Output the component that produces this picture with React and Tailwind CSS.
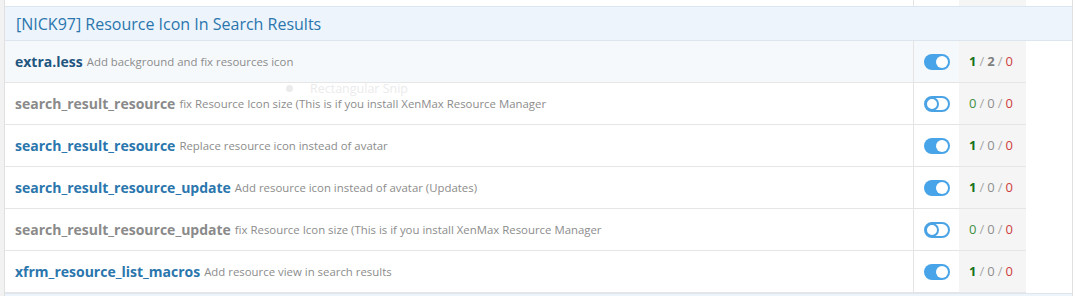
import React from "react";

const rows = [
  { name: "extra.less", desc: "Add background and fix resources icon", on: true, counts: [1, 2, 0], hover: true },
  { name: "search_result_resource", desc: "fix Resource Icon size (This is if you install XenMax Resource Manager", on: false, counts: [0, 0, 0] },
  { name: "search_result_resource", desc: "Replace resource icon instead of avatar", on: true, counts: [1, 0, 0] },
  { name: "search_result_resource_update", desc: "Add resource icon instead of avatar (Updates)", on: true, counts: [1, 0, 0] },
  { name: "search_result_resource_update", desc: "fix Resource Icon size (This is if you install XenMax Resource Manager", on: false, counts: [0, 0, 0] },
  { name: "xfrm_resource_list_macros", desc: "Add resource view in search results", on: true, counts: [1, 0, 0] },
];

function Toggle({ on }) {
  if (on) {
    return (
      <svg width="26" height="16" viewBox="0 0 26 16">
        <rect x="0" y="0" width="26" height="16" rx="8" fill="#47a4e8" />
        <circle cx="18" cy="8" r="6" fill="#fff" />
      </svg>
    );
  }
  return (
    <svg width="26" height="16" viewBox="0 0 26 16">
      <rect x="1" y="1" width="24" height="14" rx="7" fill="#fff" stroke="#4aa3e4" strokeWidth="2" />
      <circle cx="8" cy="8" r="6" fill="#fff" stroke="#4aa3e4" strokeWidth="2" />
    </svg>
  );
}

function Counts({ c }) {
  const [a, b, d] = c;
  return (
    <div className="flex items-center text-[13px] gap-[3px]">
      <span className={a > 0 ? "font-bold text-[#177217]" : "text-[#3f8f3f]"}>{a}</span>
      <span className="text-[#a9a9a9]">/</span>
      <span className={b > 0 ? "font-bold text-[#7f7f7f]" : "text-[#8f8f8f]"}>{b}</span>
      <span className="text-[#a9a9a9]">/</span>
      <span className="text-[#cf3d3d]">{d}</span>
    </div>
  );
}

export default function App() {
  return (
    <div className="relative w-[1078px] h-[296px] overflow-hidden bg-white flex font-['Open_Sans',sans-serif]">
      <div className="w-[4px] bg-[#f2f2f2]" />
      <div className="w-[1069px] border-x border-[#e0e0e0] flex flex-col">
        {/* tail of previous group */}
        <div className="h-[6px] grid grid-cols-[908px_46px_67px_1fr]">
          <div />
          <div className="border-l border-[#e4e4e4]" />
          <div className="bg-[#f5f5f5]" />
          <div />
        </div>

        {/* group header */}
        <div className="h-[35px] bg-[#edf4fc] border-y border-[#dde5ee] flex items-center pl-[11px]">
          <span className="text-[16px] text-[#2a76ad]">[NICK97] Resource Icon In Search Results</span>
        </div>

        {rows.map((r, i) => (
          <div key={i} className="h-[42px] grid grid-cols-[908px_46px_67px_1fr]">
            <div className={`flex items-center pl-[10px] border-b border-[#e6e6e6] ${r.hover ? "bg-[#f6f9fc]" : ""}`}>
              <span
                className={`text-[14px] font-bold ${
                  !r.on ? "text-[#8a8a8a]" : r.hover ? "text-[#1f5680]" : "text-[#2a76ad]"
                }`}
              >
                {r.name}
              </span>
              <span className="ml-[4px] text-[11.4px] text-[#8c8c8c]">{r.desc}</span>
            </div>
            <div className={`flex items-center justify-center border-l border-b border-[#e4e4e4] ${r.hover ? "bg-[#f6f9fc]" : ""}`}>
              <Toggle on={r.on} />
            </div>
            <div className="flex items-center pl-[10px] bg-[#f5f5f5] border-b border-[#e6e6e6]">
              <Counts c={r.counts} />
            </div>
            <div />
          </div>
        ))}

        <div className="flex-1 bg-[#edf4fc] border-t border-[#dde5ee]" />
      </div>
      <div className="flex-1 bg-white" />

      {/* ghost of snipping tool label */}
      <div className="absolute left-[286px] top-[82px] flex items-center gap-[17px] text-[12.5px] leading-[13px] text-[#ebebeb] pointer-events-none">
        <span className="w-[7px] h-[7px] rounded-full bg-[#ebebeb]" />
        <span>Rectangular Snip</span>
      </div>
    </div>
  );
}
